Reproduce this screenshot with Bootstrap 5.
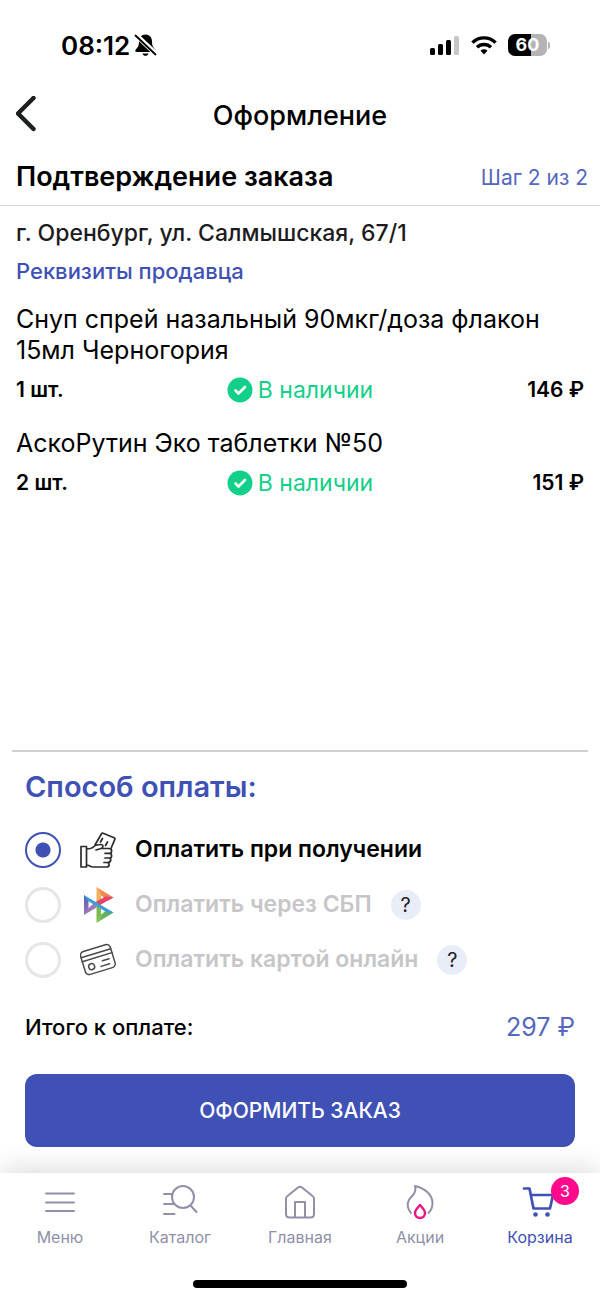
<!DOCTYPE html>
<html lang="ru">
<head>
<meta charset="utf-8">
<meta name="viewport" content="width=device-width, initial-scale=1">
<title>Оформление</title>
<link href="https://cdn.jsdelivr.net/npm/bootstrap@5.3.0/dist/css/bootstrap.min.css" rel="stylesheet">
<style>
:root { --brand: #3f51b5; --brand-soft: #5468bd; --ok: #12cf8a; --muted: #9090a8; --hot: #ff0a8c; }
body { font-family: Inter, "Liberation Sans", sans-serif; color: #000; background: #fff; }
svg { display: block; flex: none; }
.status-bar { height: 86px; padding: 4px 50px 0 61px; }
.clock { font-size: 26px; font-weight: 600; }
.wifi { margin: 0 11px; }
.battery { width: 39px; height: 22px; margin-right: 1px; border-radius: 7px; color: #fff; font-size: 18px; font-weight: 700; line-height: 22px; background: linear-gradient(90deg, #000 60%, #b4b4b4 60%); }
.battery-tip { width: 2px; height: 7px; background: #b4b4b4; border-radius: 0 2px 2px 0; }
.app-header { height: 60px; }
.app-title { font-size: 27px; font-weight: 500; }
.step-bar { height: 60px; padding: 4px 12px 0 16px; border-bottom: 1px solid #d8d8d8; }
.step-title { font-size: 27px; font-weight: 600; }
.step-count { font-size: 21px; color: var(--brand-soft); }
.order { padding: 8px 16px 0; }
.place { font-size: 23px; line-height: 38px; font-weight: 500; color: #1c1c1e; }
.seller { font-size: 22px; line-height: 38px; font-weight: 500; }
.brand-text { color: var(--brand); }
.product { margin-top: 14px; }
.product-name { font-size: 25px; line-height: 31px; font-weight: 400; }
.product-line { height: 48px; font-size: 21px; font-weight: 600; }
.in-stock { color: var(--ok); font-size: 23px; font-weight: 400; }
.payment { margin: 0 12px; padding: 15px 13px 26px; border-top: 2px solid #d0d0d0; }
.pay-title { font-size: 29px; line-height: 40px; font-weight: 600; margin-bottom: 15px; }
.pay-option { height: 55px; font-size: 23px; font-weight: 600; }
.pay-option .form-check-input { width: 36px; height: 36px; border: 3px solid #e6e6e6; opacity: 1; margin: 0 19px 0 0; flex: none; }
.pay-option .form-check-input:checked { border: 2px solid var(--brand); background: radial-gradient(circle, var(--brand) 7px, #fff 8px); }
.pay-option input:disabled + label { color: #c6c6c8; opacity: 1; }
.pay-label { margin-left: 19px; }
.hint { width: 30px; height: 30px; margin-left: 19px; background: #e9edf8; color: #222; font-size: 20px; line-height: 30px; }
.total { margin-top: 20px; line-height: 40px; font-size: 22px; font-weight: 500; }
.total-sum { font-size: 25px; font-weight: 400; color: var(--brand-soft); }
.btn-order { margin-top: 27px; height: 73px; border-radius: 12px; font-size: 21px; font-weight: 500; --bs-btn-bg: var(--brand); --bs-btn-color: #fff; --bs-btn-hover-bg: #35459e; --bs-btn-hover-color: #fff; }
.tab-bar { background: #fff; box-shadow: 0 0 30px rgba(0,0,0,.18); padding-top: 10px; }
.tab-link { color: var(--muted); font-size: 16px; line-height: 24px; text-decoration: none; }
.tab-link.active { color: var(--brand); }
.tab-link svg { margin-bottom: 4px; }
.cart-count { left: 30px; top: -6px; width: 28px; height: 28px; line-height: 28px; background: var(--hot); color: #fff; }
.home-bar { width: 214px; height: 8px; margin: 31px auto 12px; background: #000; }
</style>
</head>
<body>
<div class="d-flex flex-column min-vh-100">
  <div class="status-bar d-flex align-items-center">
    <span class="clock">08:12</span>
    <svg class="ms-1" width="23" height="24" viewBox="0 0 23 24"><path d="M11.500 1.500c-4 0-6.500 3-6.500 7 0 5-1.500 6-3.500 8.500-.6 1 0 2 1 2h18c1 0 1.600-1 1-2-2-2.500-3.500-3.500-3.500-8.500 0-4-2.500-7-6.500-7zM8.500 20.500h6c-.5 1.500-1.600 2.300-3 2.300s-2.500-.8-3-2.300z"/><path d="M2 2 22 21" stroke="#fff" stroke-width="5"/><path d="M1.500 2.500 21.500 21.500" stroke="#000" stroke-width="1.800" stroke-linecap="round"/></svg>
    <svg class="ms-auto" width="30" height="19" viewBox="0 0 30 19"><rect y="12" width="5" height="7" rx="1.500"/><rect x="8" y="8" width="5" height="11" rx="1.500"/><rect x="16" y="4" width="5" height="15" rx="1.500"/><rect x="24" width="5" height="19" rx="1.500" fill="#c6c6c6"/></svg>
    <svg class="wifi" width="26" height="19" viewBox="0 0 26 19" fill="none" stroke="#000" stroke-width="3.400"><path d="M1.400 6.600a16.500 16.500 0 0 1 23.200 0M6 11.300a10 10 0 0 1 14 0"/><path d="M9.500 14.700a5 5 0 0 1 7 0L13 18.500z" fill="#000" stroke="none"/></svg>
    <span class="battery text-center">60</span><span class="battery-tip"></span>
  </div>

  <header class="app-header position-relative d-flex align-items-center justify-content-center">
    <button type="button" class="btn border-0 p-0 position-absolute start-0 ms-3" aria-label="Назад"><svg width="22" height="40" viewBox="0 0 22 40" fill="none" stroke="#1d1f20" stroke-width="4.500" stroke-linecap="round" stroke-linejoin="round"><path d="M17.500 2 2 17.500l15.500 15.500"/></svg></button>
    <h1 class="app-title m-0">Оформление</h1>
  </header>

  <div class="step-bar d-flex align-items-center justify-content-between">
    <h2 class="step-title m-0">Подтверждение заказа</h2>
    <span class="step-count">Шаг 2 из 2</span>
  </div>

  <main class="order flex-grow-1">
    <div class="place">г. Оренбург, ул. Салмышская, 67/1</div>
    <div class="seller"><a href="#" class="brand-text text-decoration-none">Реквизиты продавца</a></div>
    <article class="product">
      <h3 class="product-name m-0">Снуп спрей назальный 90мкг/доза флакон 15мл Черногория</h3>
      <div class="product-line row align-items-center">
        <span class="col">1 шт.</span>
        <span class="col-auto in-stock d-flex align-items-center p-0"><svg class="me-1" width="27" height="26" viewBox="0 0 27 26"><circle cx="13" cy="13" r="12.500" fill="#12cf8a"/><path d="m8.500 13.500 3 3 6.500-6.500" fill="none" stroke="#fff" stroke-width="2.600" stroke-linecap="round" stroke-linejoin="round"/></svg>В наличии</span>
        <span class="col text-end">146 ₽</span>
      </div>
    </article>
    <article class="product">
      <h3 class="product-name m-0">АскоРутин Эко таблетки №50</h3>
      <div class="product-line row align-items-center">
        <span class="col">2 шт.</span>
        <span class="col-auto in-stock d-flex align-items-center p-0"><svg class="me-1" width="27" height="26" viewBox="0 0 27 26"><circle cx="13" cy="13" r="12.500" fill="#12cf8a"/><path d="m8.500 13.500 3 3 6.500-6.500" fill="none" stroke="#fff" stroke-width="2.600" stroke-linecap="round" stroke-linejoin="round"/></svg>В наличии</span>
        <span class="col text-end">151 ₽</span>
      </div>
    </article>
  </main>

  <form class="payment">
    <h2 class="pay-title brand-text">Способ оплаты:</h2>
    <div class="pay-option d-flex align-items-center">
      <input class="form-check-input" type="radio" name="pay" id="pay-cash" checked>
      <label class="d-flex align-items-center" for="pay-cash">
        <svg width="36" height="36" viewBox="0 0 36 36" fill="none" stroke="#2a2c2e" stroke-width="1.700" stroke-linecap="round" stroke-linejoin="round"><path d="M1 14.500h5.500V35H1zM6.500 17c4 0 5.500-.5 7.500-2.500 1.500-1.500 3.500-2 7-2 2.500 0 2.500 3.500 0 4l-5 1.500M6.500 33c3 0 3.500 2 6.500 2h13.500c3.500 0 3.500-4.500 0-4.500H24M20.500 16.500H29c3.500 0 3.500 4.800 0 4.800h-4M29.500 21.300c2.800 0 2.800 4.700 0 4.700H25M29 26c2.500 0 2.500 4.500-1.500 4.500M15 13 21.500 1.800q.5-1 1.600-.6l11 4.500q1.200.5.700 1.700L31 16.500M20.500 10l2-3.500M25.500 13.500l2-3.500"/></svg>
        <span class="pay-label">Оплатить при получении</span>
      </label>
    </div>
    <div class="pay-option d-flex align-items-center">
      <input class="form-check-input" type="radio" name="pay" id="pay-sbp" disabled>
      <label class="d-flex align-items-center" for="pay-sbp">
        <svg width="36" height="36" viewBox="0 0 36 36">
          <defs><linearGradient id="g1" x1="0" y1="0" x2="0" y2="1"><stop stop-color="#4a68b8"/><stop offset="1" stop-color="#a474b4"/></linearGradient><linearGradient id="g2"><stop stop-color="#f5a04c"/><stop offset="1" stop-color="#ee6f5c"/></linearGradient><linearGradient id="g3"><stop stop-color="#8cc051"/><stop offset="1" stop-color="#3ea568"/></linearGradient></defs>
          <path d="M16.500 0v17l4.500-3V8.500z" fill="#f2b35a"/><path d="M16.500 0 33.500 10.500 28 13.500 21 8.500z" fill="url(#g2)"/><path d="M33.500 10.500 16.500 20v-5.500l9-5z" fill="#e5446a"/>
          <path d="M16.500 19v17l4.500-8v-6.500z" fill="#7bbc4c"/><path d="M16.500 36 33.500 25.500 27 23l-6 4.500z" fill="url(#g3)"/>
          <path d="M4 8v20l4.500-5V12.500z" fill="url(#g1)"/><path d="M4 28 16.500 20.500V14L8.500 21z" fill="#9c7bbb"/><path d="M4 8 33.500 25.500H27L8 14z" fill="#3d9ed6"/>
        </svg>
        <span class="pay-label">Оплатить через СБП</span>
      </label>
      <button type="button" class="hint btn border-0 p-0 rounded-circle" aria-label="Подробнее об оплате через СБП">?</button>
    </div>
    <div class="pay-option d-flex align-items-center">
      <input class="form-check-input" type="radio" name="pay" id="pay-card" disabled>
      <label class="d-flex align-items-center" for="pay-card">
        <svg width="36" height="36" viewBox="0 0 36 36" fill="none" stroke="#4a4a4e" stroke-width="1.500" stroke-linecap="round"><g transform="rotate(-17 18 18)"><rect x="2.500" y="5.500" width="31" height="24" rx="4"/><path d="M2.500 11h31M2.500 15h31M22 20h7M19 25h9"/><circle cx="10" cy="22.500" r="3"/></g></svg>
        <span class="pay-label">Оплатить картой онлайн</span>
      </label>
      <button type="button" class="hint btn border-0 p-0 rounded-circle" aria-label="Подробнее об оплате картой">?</button>
    </div>
    <div class="total d-flex justify-content-between">
      <span>Итого к оплате:</span><span class="total-sum">297 ₽</span>
    </div>
    <button type="submit" class="btn btn-order w-100 border-0">ОФОРМИТЬ ЗАКАЗ</button>
  </form>

  <nav class="tab-bar">
    <div class="d-flex">
      <a href="#" class="tab-link d-flex flex-column align-items-center flex-fill w-25"><svg width="38" height="38" viewBox="0 0 38 38" fill="none" stroke="currentColor" stroke-width="2" stroke-linecap="round"><path d="M5 10.500h28M5 19.500h28M5 28h28"/></svg>Меню</a>
      <a href="#" class="tab-link d-flex flex-column align-items-center flex-fill w-25"><svg width="38" height="38" viewBox="0 0 38 38" fill="none" stroke="currentColor" stroke-width="2" stroke-linecap="round"><circle cx="22" cy="14" r="11"/><path d="m29.500 22.500 6 6.500M3 11h7.500M3 21h10M3 31h10.500"/></svg>Каталог</a>
      <a href="#" class="tab-link d-flex flex-column align-items-center flex-fill w-25"><svg width="38" height="38" viewBox="0 0 38 38" fill="none" stroke="currentColor" stroke-width="2" stroke-linejoin="round"><path d="M5 15.500q0-1.500 1.500-2.500L17 4.500q2-1.500 4 0L31.500 13q1.500 1 1.500 2.500V31q0 3.500-3.500 3.500h-21Q5 34.500 5 31zM14 34V19h10v15"/></svg>Главная</a>
      <a href="#" class="tab-link d-flex flex-column align-items-center flex-fill w-25"><svg width="38" height="38" viewBox="0 0 38 38" fill="none" stroke="currentColor" stroke-width="2" stroke-linecap="round" stroke-linejoin="round"><path d="M10 30C4 22 7 17 11.500 12.500c3-3 3.500-6 2.500-9.500C24 5 31.500 12 31.500 20c0 4-1.500 7.500-4 10"/><path d="M19 22c-2.500 3-5 5-5 8a5 5 0 0 0 10 0c0-3-2.500-5-5-8z" stroke="#ee1686" stroke-width="2.500"/></svg>Акции</a>
      <a href="#" class="tab-link active d-flex flex-column align-items-center flex-fill w-25"><span class="position-relative"><svg width="38" height="38" viewBox="0 0 38 38" fill="none" stroke="currentColor" stroke-width="2.700" stroke-linecap="round" stroke-linejoin="round"><path d="M3 5.500h5.500l4 20h16.500l3-13.500H10"/><g fill="currentColor" stroke="none"><circle cx="14.500" cy="31.500" r="2.300"/><circle cx="26.500" cy="31.500" r="2.300"/></g></svg><span class="cart-count position-absolute rounded-circle text-center">3</span></span>Корзина</a>
    </div>
    <div class="home-bar rounded-pill"></div>
  </nav>
</div>
<script src="https://cdn.jsdelivr.net/npm/bootstrap@5.3.0/dist/js/bootstrap.bundle.min.js"></script>
</body>
</html>
